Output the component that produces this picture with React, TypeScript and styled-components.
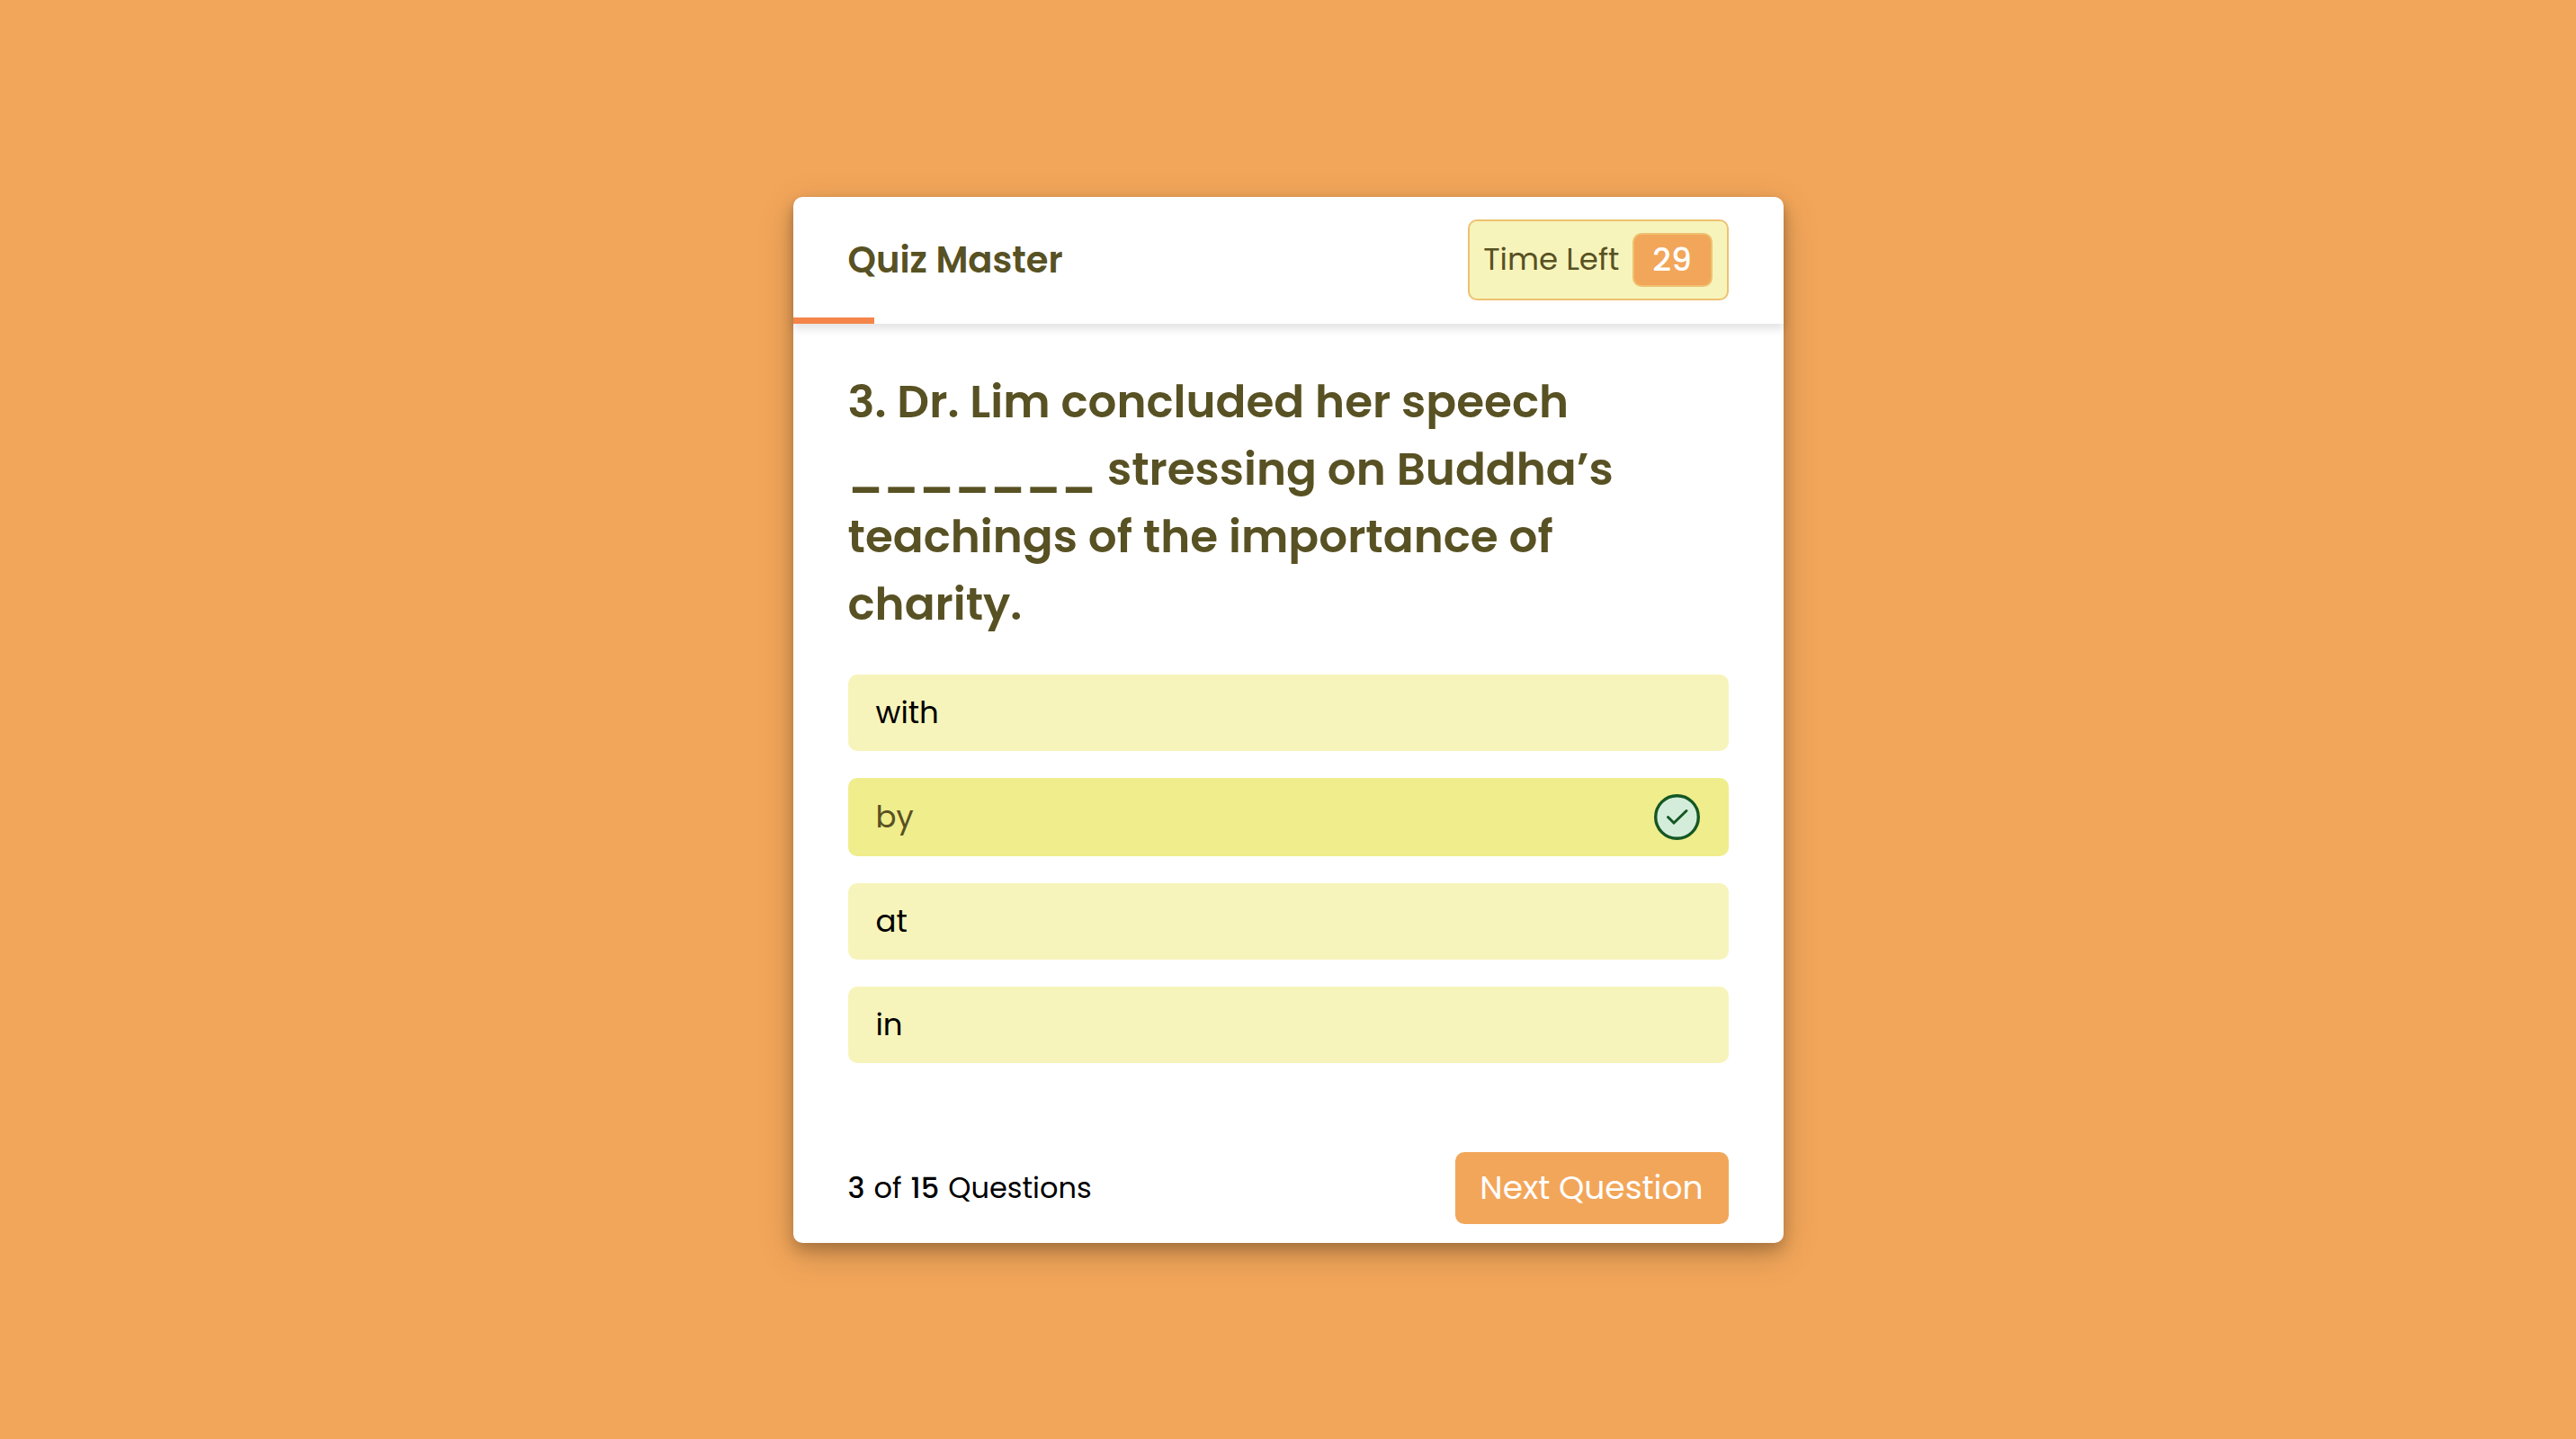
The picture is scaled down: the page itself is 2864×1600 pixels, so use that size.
import React, { useState } from "react";
import styled, { createGlobalStyle } from "styled-components";

const color = {
  page: "#f2a65a",
  ink: "#585123",
  accent: "#f58549",
  sand: "#eec170",
  pale: "#f7f4bb",
  picked: "#f0ed8c",
};

const GlobalStyle = createGlobalStyle`
  *, *::before, *::after { box-sizing: border-box; }
  body {
    margin: 0;
    background: ${color.page};
    color: #000;
    font-family: Poppins, Inter, "Liberation Sans", sans-serif;
  }
  h1, h2, p { margin: 0; }
  button { font-family: inherit; cursor: pointer; }
`;

const Page = styled.main`
  min-height: 100vh;
  display: grid;
  place-items: center;
  grid-template-columns: minmax(0, 1101px);
  justify-content: center;
`;

const Card = styled.article`
  width: 100%;
  background: #fff;
  border-radius: 10px;
  box-shadow: 0 8px 16px rgba(0, 0, 0, 0.2), 0 12px 40px rgba(0, 0, 0, 0.19);
`;

const Header = styled.header`
  border-radius: 10px 10px 0 0;
  box-shadow: 0 6px 10px rgba(0, 0, 0, 0.11);
`;

const HeaderRow = styled.div`
  display: flex;
  align-items: center;
  justify-content: space-between;
  padding: 25px 61px 19px;
`;

const Title = styled.h1`
  color: ${color.ink};
  font-size: 40px;
  line-height: 60px;
  font-weight: 600;
`;

const Timer = styled.div`
  display: flex;
  align-items: center;
  gap: 14px;
  padding: 13px 16px 13px 15px;
  border: 2px solid ${color.sand};
  border-radius: 10px;
  background: ${color.pale};
`;

const TimerLabel = styled.span`
  color: ${color.ink};
  font-size: 34px;
  line-height: 49px;
`;

const TimerValue = styled.time`
  min-width: 89px;
  padding: 3px 0;
  border: 2px solid ${color.sand};
  border-radius: 10px;
  background: ${color.page};
  color: #fff;
  font-size: 36px;
  line-height: 50px;
  font-weight: 500;
  text-align: center;
`;

const Track = styled.div`
  height: 7px;
`;

const Fill = styled.div`
  height: 100%;
  background: ${color.accent};
`;

const Body = styled.section`
  padding: 49px 61px 79px;
`;

const Question = styled.h2`
  margin-bottom: 41px;
  color: ${color.ink};
  font-size: 50px;
  line-height: 75px;
  font-weight: 600;
`;

const Options = styled.div`
  display: grid;
  gap: 30px;
`;

const Option = styled.button<{ $picked: boolean }>`
  display: flex;
  align-items: center;
  justify-content: space-between;
  width: 100%;
  padding: 18px 32px 18px 31px;
  border: 0;
  border-radius: 10px;
  background: ${(p) => (p.$picked ? color.picked : color.pale)};
  color: ${(p) => (p.$picked ? color.ink : "#000")};
  font-size: 34px;
  line-height: 49px;
  text-align: left;
`;

const Tick = styled.svg`
  display: block;
  width: 51px;
  height: 51px;
`;

const Footer = styled.footer`
  display: flex;
  align-items: center;
  justify-content: space-between;
  padding: 20px 61px 21px;
`;

const Count = styled.p`
  display: flex;
  gap: 10px;
  font-size: 32px;
  line-height: 50px;

  b { font-weight: 500; }
`;

const NextButton = styled.button`
  padding: 15px 28px 15px 27px;
  border: 0;
  border-radius: 10px;
  background: ${color.page};
  color: #fff;
  font-size: 36px;
  line-height: 50px;
`;

const options = ["with", "by", "at", "in"];

export default function App() {
  const [picked, setPicked] = useState("by");
  const secondsLeft = 29;
  const elapsed = (30 - secondsLeft) * 8.2;

  return (
    <>
      <GlobalStyle />
      <Page>
        <Card>
          <Header>
            <HeaderRow>
              <Title>Quiz Master</Title>
              <Timer>
                <TimerLabel>Time Left</TimerLabel>
                <TimerValue>{secondsLeft}</TimerValue>
              </Timer>
            </HeaderRow>
            <Track>
              <Fill style={{ width: `${elapsed}%` }} />
            </Track>
          </Header>
          <Body>
            <Question>
              3. Dr. Lim concluded her speech _______ stressing on Buddha’s teachings of the
              importance of charity.
            </Question>
            <Options>
              {options.map((text) => (
                <Option
                  key={text}
                  type="button"
                  $picked={text === picked}
                  aria-pressed={text === picked}
                  onClick={() => setPicked(text)}
                >
                  <span>{text}</span>
                  {text === picked && (
                    <Tick viewBox="0 0 51 51" aria-hidden="true">
                      <circle cx="25.5" cy="25.5" r="23.8" fill="#d4edda" stroke="#155724" strokeWidth="3.4" />
                      <path
                        d="M15.5 25.5 L22 32 L36 18.5"
                        fill="none"
                        stroke="#155724"
                        strokeWidth="3"
                        strokeLinecap="round"
                      />
                    </Tick>
                  )}
                </Option>
              ))}
            </Options>
          </Body>
          <Footer>
            <Count>
              <b>3</b>
              <span>of</span>
              <b>15</b>
              <span>Questions</span>
            </Count>
            <NextButton type="button">Next Question</NextButton>
          </Footer>
        </Card>
      </Page>
    </>
  );
}
